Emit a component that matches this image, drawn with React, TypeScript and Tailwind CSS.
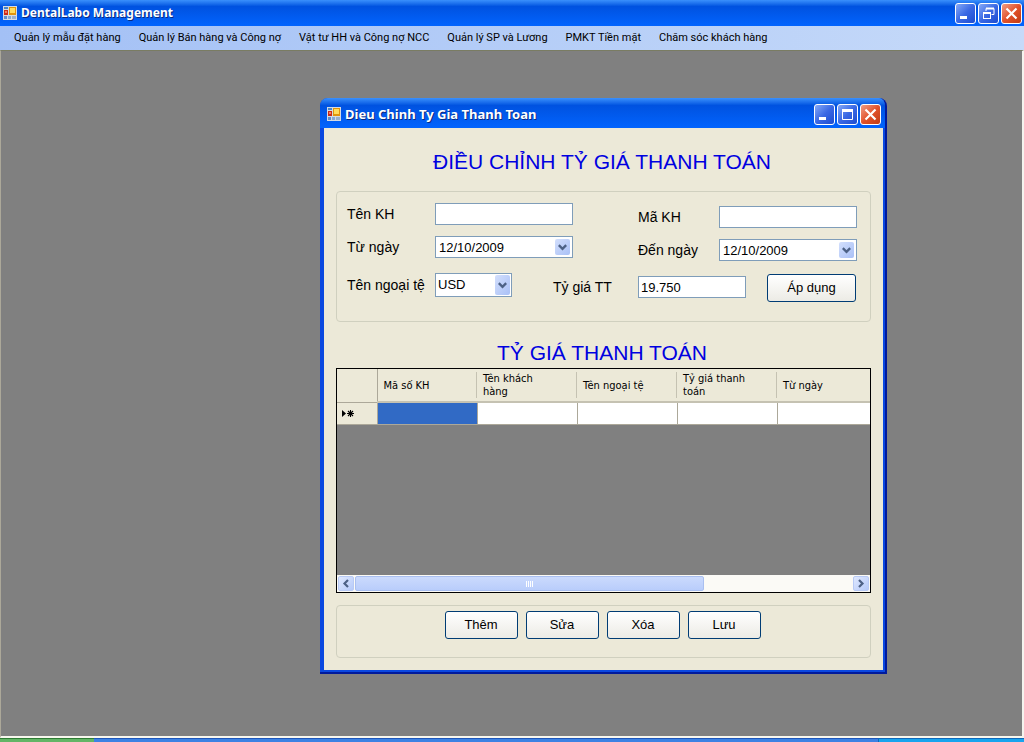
import type { ReactNode } from 'react';

const menuItems = [
  'Quản lý mẫu đặt hàng',
  'Quản lý Bán hàng và Công nợ',
  'Vật tư HH và Công nợ NCC',
  'Quản lý SP và Lương',
  'PMKT Tiền mặt',
  'Chăm sóc khách hàng',
];

const columns = ['Mã số KH', 'Tên khách hàng', 'Tên ngoại tệ', 'Tỷ giá thanh toán', 'Từ ngày'];

const actions = ['Thêm', 'Sửa', 'Xóa', 'Lưu'];

function FormIcon() {
  return (
    <svg width="14" height="14" viewBox="0 0 14 14" className="shrink-0" aria-hidden="true">
      <rect width="14" height="14" fill="#d3dbe4" />
      <rect x="1" y="1" width="4" height="2" fill="#4a86c8" />
      <rect x="1" y="4" width="4" height="5" fill="#cc2a18" />
      <rect x="2" y="5" width="2" height="2" fill="#f08060" />
      <rect x="6" y="1" width="7" height="8" fill="#e0940c" />
      <rect x="7" y="2" width="5" height="5" fill="#ffdc5c" />
      <rect x="1" y="10" width="3" height="3" fill="#5d8ccc" />
      <rect x="5" y="10" width="3" height="3" fill="#86a8d4" />
      <rect x="9" y="10" width="4" height="3" fill="#9ab0cc" />
    </svg>
  );
}

function CaptionButton({ label, close, children }: { label: string; close?: boolean; children: ReactNode }) {
  return (
    <button
      type="button"
      aria-label={label}
      className={
        close
          ? 'flex size-[21px] items-center justify-center rounded-[3px] border border-white bg-linear-to-br from-[#ee9c84] via-[#e2522a] to-[#c03c14]'
          : 'flex size-[21px] items-center justify-center rounded-[3px] border border-white bg-linear-to-br from-[#86a8f6] via-[#3a68e4] to-[#1c4cd0]'
      }
    >
      <svg width="19" height="19" viewBox="0 0 19 19" fill="none" aria-hidden="true">
        {children}
      </svg>
    </button>
  );
}

function Minimize() {
  return (
    <CaptionButton label="Minimize">
      <rect x="4" y="12" width="7" height="3" fill="#fff" />
    </CaptionButton>
  );
}

function Close() {
  return (
    <CaptionButton label="Close" close>
      <path d="M4.5 4.5l10 10M14.5 4.5l-10 10" stroke="#fff" strokeWidth="2.2" />
    </CaptionButton>
  );
}

function Chevron() {
  return (
    <svg width="9" height="7" viewBox="0 0 9 7" fill="none" aria-hidden="true">
      <path d="M0.8 1.2l3.7 3.7L8.2 1.2" stroke="#4d6185" strokeWidth="2.4" />
    </svg>
  );
}

function TextField({ id, width, value }: { id: string; width: string; value?: string }) {
  return (
    <input
      id={id}
      defaultValue={value}
      className={`h-[22px] border border-[#7f9db9] bg-white px-0.5 text-[13px] leading-5 outline-none ${width}`}
    />
  );
}

function DateField({ id, value }: { id: string; value: string }) {
  return (
    <div className="flex h-[22px] w-[138px] items-center border border-[#7f9db9] bg-white pr-0.5">
      <input id={id} defaultValue={value} className="min-w-0 flex-1 pt-0.5 pl-[3px] text-[13px] leading-5 outline-none" />
      <button
        type="button"
        aria-label="Chọn ngày"
        className="flex h-4 w-[15px] items-center justify-center rounded-xs bg-linear-to-br from-[#d3dffc] to-[#a9c0f6]"
      >
        <Chevron />
      </button>
    </div>
  );
}

function ScrollArrow({ label, d }: { label: string; d: string }) {
  return (
    <button
      type="button"
      aria-label={label}
      className="flex h-[15px] w-4 shrink-0 items-center justify-center rounded-xs border border-[#b8caf5] bg-linear-to-br from-[#dfe8fe] to-[#b6caf9]"
    >
      <svg width="8" height="9" viewBox="0 0 8 9" fill="none" aria-hidden="true">
        <path d={d} stroke="#4d6185" strokeWidth="2.2" />
      </svg>
    </button>
  );
}

function RateDialog() {
  return (
    <section className="absolute top-[47px] left-[319px] w-[567px] overflow-hidden rounded-t-lg border-r-2 border-b-2 border-[#001a9c] bg-[#0a48e0] font-['Liberation_Sans',Arial,sans-serif] text-[13px] text-black">
      <header className="flex h-[30px] items-center gap-1 bg-linear-to-b from-[#3a90fc] via-[#0052e0] via-25% to-[#0264fe] pt-0.5 pr-1 pl-[7px]">
        <FormIcon />
        <h2 className="flex-1 font-['Noto_Sans',sans-serif] text-[13px] leading-4 font-bold text-white [text-shadow:1px_1px_#0a2a80]">
          Dieu Chinh Ty Gia Thanh Toan
        </h2>
        <div className="flex gap-0.5">
          <Minimize />
          <CaptionButton label="Maximize">
            <path d="M4.5 4v10.5h10V4" stroke="#fff" />
            <rect x="4" y="4" width="11" height="3" fill="#fff" />
          </CaptionButton>
          <Close />
        </div>
      </header>

      <div className="mr-0.5 mb-0.5 ml-1 flex flex-col bg-[#ece9d8] px-3 pb-3">
        <h1 className="pt-5 pr-[3px] text-center text-[21px] leading-7 text-[#0000e0]">ĐIỀU CHỈNH TỶ GIÁ THANH TOÁN</h1>

        <form className="mt-[15px] flex h-[131px] rounded border border-[#d0d0bf] px-2.5 pt-[11px]">
          <div className="w-[291px]">
            <div className="flex h-[22px] items-center">
              <label htmlFor="name" className="w-[88px] text-sm">Tên KH</label>
              <TextField id="name" width="w-[138px]" />
            </div>
            <div className="mt-[11px] flex h-[22px] items-center">
              <label htmlFor="from" className="w-[88px] text-sm">Từ ngày</label>
              <DateField id="from" value="12/10/2009" />
            </div>
            <div className="mt-[15px] flex h-6 items-center">
              <label htmlFor="currency" className="w-[88px] text-sm">Tên ngoại tệ</label>
              <div className="relative h-6 w-[77px]">
                <select
                  id="currency"
                  className="h-6 w-full appearance-none border border-[#7f9db9] bg-white pl-0.5 text-[13px] outline-none"
                >
                  <option>USD</option>
                </select>
                <span className="pointer-events-none absolute top-0.5 right-0.5 flex h-5 w-[15px] items-center justify-center rounded-xs bg-linear-to-br from-[#d3dffc] to-[#a9c0f6]">
                  <Chevron />
                </span>
              </div>
              <label htmlFor="rate" className="ml-[41px] pt-1 text-sm">Tỷ giá TT</label>
            </div>
          </div>

          <div className="flex-1 pt-[3px]">
            <div className="flex h-[22px] items-center">
              <label htmlFor="code" className="w-[81px] text-sm">Mã KH</label>
              <TextField id="code" width="w-[138px]" />
            </div>
            <div className="mt-[11px] flex h-[22px] items-center">
              <label htmlFor="to" className="w-[81px] text-sm">Đến ngày</label>
              <DateField id="to" value="12/10/2009" />
            </div>
            <div className="mt-[13px] flex h-7 items-start gap-[21px]">
              <div className="flex pt-0.5">
                <TextField id="rate" width="w-[108px]" value="19.750" />
              </div>
              <button
                type="button"
                className="h-7 w-[89px] rounded-[3px] border border-[#003c74] bg-linear-to-b from-white to-[#ecebe5]"
              >
                Áp dụng
              </button>
            </div>
          </div>
        </form>

        <h2 className="mt-4 pr-[3px] text-center text-[21px] leading-[30px] text-[#0000e0]">TỶ GIÁ THANH TOÁN</h2>

        <div className="flex h-[225px] flex-col border border-black bg-[#808080]">
          <table className="w-full table-fixed border-collapse font-['DejaVu_Sans_Condensed',sans-serif] text-[11px] leading-[13px]">
            <thead>
              <tr className="h-[33px] bg-[#ece9d8]">
                <th className="w-10 border-r border-b border-[#aca899]" aria-label="Dòng" />
                {columns.map((name) => (
                  <th key={name} className="group w-[100px] border-b-2 border-[#c5c2b2] p-0 text-left font-normal last:w-auto">
                    <div className="flex h-[26px] items-center border-r border-[#c5c2b2] pr-5 pl-1.5 group-last:border-r-0">
                      {name}
                    </div>
                  </th>
                ))}
              </tr>
            </thead>
            <tbody>
              <tr className="h-[22px] bg-white">
                <th className="border-r border-b border-[#aca899] bg-[#ece9d8] p-0 pl-1" aria-label="Dòng mới">
                  <svg width="13" height="9" viewBox="0 0 13 9" aria-hidden="true">
                    <path d="M1 1l4 3.5L1 8z" fill="#000" />
                    <path d="M9.500 1v7M6 4.500h7M7 2l5 5M12 2l-5 5" stroke="#000" strokeWidth="1.1" />
                  </svg>
                </th>
                <td className="border-r border-b border-[#aca899] bg-[#316ac5]" />
                <td className="border-r border-b border-[#aca899]" />
                <td className="border-r border-b border-[#aca899]" />
                <td className="border-r border-b border-[#aca899]" />
                <td className="border-b border-[#aca899]" />
              </tr>
            </tbody>
          </table>
          <div className="mt-auto flex h-[17px] items-center bg-[#fbfaf6] px-px">
            <ScrollArrow label="Cuộn trái" d="M6 1L2.5 4.5L6 8" />
            <div className="flex flex-1">
              <div className="ml-px flex h-[15px] w-[70%] items-center justify-center gap-px rounded-xs border border-[#a9bff0] bg-linear-to-b from-[#cbdafd] to-[#b9cdfb]">
                <span className="h-1.5 w-px bg-white" />
                <span className="h-1.5 w-px bg-white" />
                <span className="h-1.5 w-px bg-white" />
                <span className="h-1.5 w-px bg-white" />
              </div>
            </div>
            <ScrollArrow label="Cuộn phải" d="M2 1l3.5 3.5L2 8" />
          </div>
        </div>

        <div className="mt-3 flex h-[53px] items-start justify-center gap-2 rounded border border-[#d0d0bf] pt-[5px] pr-0.5">
          {actions.map((name) => (
            <button
              key={name}
              type="button"
              className="h-7 w-[73px] rounded-[3px] border border-[#003c74] bg-linear-to-b from-white to-[#ecebe5]"
            >
              {name}
            </button>
          ))}
        </div>
      </div>
    </section>
  );
}

export default function App() {
  return (
    <div className="flex h-screen flex-col overflow-hidden bg-[#ece9d8]">
      <header className="flex h-[26px] shrink-0 items-center gap-1 bg-linear-to-b from-[#3a90fc] via-[#0052e0] via-25% to-[#0264fe] pr-0.5 pl-[3px]">
        <FormIcon />
        <h1 className="flex-1 font-['Noto_Sans',sans-serif] text-xs font-bold text-white [text-shadow:1px_1px_#0a2a80]">
          DentalLabo Management
        </h1>
        <div className="flex gap-0.5">
          <Minimize />
          <CaptionButton label="Restore">
            <path d="M7 7V4.5h8v6h-2.500" stroke="#fff" />
            <path d="M7 4.500h8" stroke="#fff" strokeWidth="2" />
            <rect x="4.500" y="8.500" width="7" height="6" stroke="#fff" />
            <path d="M4 9h8" stroke="#fff" strokeWidth="2" />
          </CaptionButton>
          <Close />
        </div>
      </header>
      <nav className="flex h-6 shrink-0 items-center gap-[18px] bg-linear-to-r from-[#a3c0f5] to-[#c6daf9] px-3.5 font-['Roboto',sans-serif] text-[11px] whitespace-nowrap text-black">
        {menuItems.map((item) => (
          <button key={item} type="button">{item}</button>
        ))}
      </nav>
      <main className="relative flex-1 border-t border-r-2 border-b-2 border-l border-t-[#7a7c62] border-r-[#f4f3ee] border-b-[#f8f7ee] border-l-[#aca899] bg-[#808080]">
        <RateDialog />
      </main>
      <footer className="flex h-1 shrink-0">
        <div className="w-[94px] border-t border-[#2f7a34] bg-[#62b566]" />
        <div className="flex-1 border-t border-[#1f56b8] bg-[#3c82e4]" />
        <div className="w-[146px] border-t border-l border-[#1068b8] bg-[#18a4ee]" />
      </footer>
    </div>
  );
}
